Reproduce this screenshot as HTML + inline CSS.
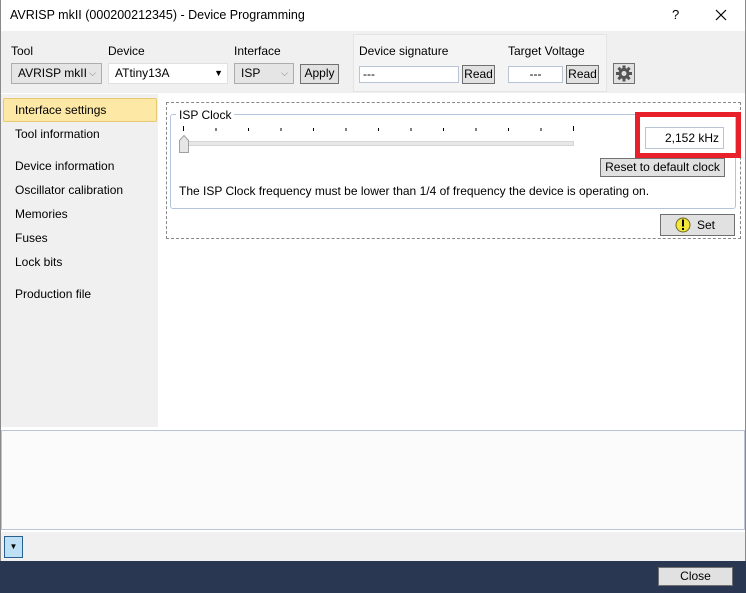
<!DOCTYPE html><html><head><style>
body{margin:0;width:746px;height:593px;position:relative;overflow:hidden;background:#fff;font-family:"Liberation Sans",sans-serif;font-size:12px;color:#000}
div{position:absolute;box-sizing:border-box}
.t{white-space:nowrap}
.btn{background:#e1e1e1;border:1px solid #adadad;text-align:center;line-height:17px}
.cb{background:#e5e5e5;border:1px solid #adadad;padding-left:6px;line-height:19px}
.in{background:#fff;border:1px solid #b8c4d4;line-height:15px}
.nav{left:15px}
</style></head><body>
<div style="left:0;top:0;width:746px;height:593px;border:1px solid #8a8a8a;border-top:none"></div>
<div class="t" style="left:10px;top:8px;font-size:12.5px">AVRISP mkII (000200212345) - Device Programming</div>
<div class="t" style="left:672px;top:7px;font-size:13px">?</div>
<div style="left:1px;top:31px;width:744px;height:62px;background:#f0f0f0"></div>
<div style="left:353px;top:34px;width:254px;height:58px;background:#f4f4f4;border:1px solid #e4e4e4"></div>
<div class="t" style="left:11px;top:44px">Tool</div>
<div class="t" style="left:108px;top:44px">Device</div>
<div class="t" style="left:234px;top:44px">Interface</div>
<div class="t" style="left:359px;top:44px">Device signature</div>
<div class="t" style="left:508px;top:44px">Target Voltage</div>
<div class="cb" style="left:11px;top:63px;width:91px;height:21px">AVRISP mkII<span style="position:absolute;right:5px;font-size:9px;color:#777">⌵</span></div>
<div style="left:108px;top:63px;width:120px;height:21px;background:#fff;border:1px solid #e0e0e0;padding-left:6px;line-height:19px">ATtiny13A<span style="position:absolute;right:4px;font-size:9px">▼</span></div>
<div class="cb" style="left:234px;top:63px;width:60px;height:21px">ISP<span style="position:absolute;right:5px;font-size:9px;color:#777">⌵</span></div>
<div class="btn" style="left:300px;top:64px;width:39px;height:20px;border-color:#707070">Apply</div>
<div class="in" style="left:359px;top:66px;width:100px;height:17px;padding-left:3px">---</div>
<div class="btn" style="left:462px;top:65px;width:33px;height:19px;border-color:#707070">Read</div>
<div class="in" style="left:508px;top:66px;width:55px;height:17px;text-align:center">---</div>
<div class="btn" style="left:566px;top:65px;width:33px;height:19px;border-color:#707070">Read</div>
<div class="btn" style="left:613px;top:63px;width:22px;height:21px;border-color:#707070"></div>
<div style="left:1px;top:94px;width:157px;height:333px;background:#f0f0f0"></div>
<div style="left:3px;top:98px;width:154px;height:24px;background:#fde8a5;border:1px solid #e8c870;border-radius:2px"></div>
<div class="t nav" style="top:103px">Interface settings</div>
<div class="t nav" style="top:127px">Tool information</div>
<div class="t nav" style="top:159px">Device information</div>
<div class="t nav" style="top:183px">Oscillator calibration</div>
<div class="t nav" style="top:207px">Memories</div>
<div class="t nav" style="top:231px">Fuses</div>
<div class="t nav" style="top:255px">Lock bits</div>
<div class="t nav" style="top:287px">Production file</div>
<div style="left:166px;top:102px;width:575px;height:137px;border:1px dashed #888"></div>
<div style="left:170px;top:114px;width:566px;height:95px;border:1px solid #b4c4dc;border-radius:3px"></div>
<div class="t" style="left:176px;top:108px;background:#fff;padding:0 3px">ISP Clock</div>
<div style="left:183px;top:141px;width:391px;height:5px;background:#e7e7e7;border:1px solid #d6d6d6"></div>
<div style="left:635px;top:112px;width:106px;height:46px;border:5px solid #e8202a"></div>
<div class="in" style="left:645px;top:127px;width:79px;height:22px;text-align:right;padding-right:4px;line-height:20px">2,152 kHz</div>
<div class="btn" style="left:600px;top:158px;width:125px;height:19px;border-color:#707070">Reset to default clock</div>
<div class="t" style="left:179px;top:184px">The ISP Clock frequency must be lower than 1/4 of frequency the device is operating on.</div>
<div class="btn" style="left:660px;top:214px;width:75px;height:22px;border-color:#707070;line-height:20px;text-align:left;padding-left:36px">Set</div>
<div style="left:1px;top:430px;width:744px;height:100px;background:#fbfbfb;border:1px solid #b8c4d8"></div>
<div style="left:1px;top:532px;width:744px;height:29px;background:#f0f0f0"></div>
<div style="left:4px;top:536px;width:19px;height:22px;background:#bee0f4;border:1px solid #2a6090;text-align:center;font-size:8px;line-height:20px">▼</div>
<div style="left:0;top:561px;width:746px;height:32px;background:#2a3752"></div>
<div class="btn" style="left:658px;top:567px;width:75px;height:19px;border-color:#707070">Close</div>
<svg style="position:absolute;left:0;top:0" width="746" height="300">
<path d="M716 10L726 20M726 10L716 20" stroke="#000" stroke-width="1.2"/>
<g transform="translate(624 73.5)">
<g fill="#555"><rect x="-1.5" y="-8" width="3" height="16"/><rect x="-8" y="-1.5" width="16" height="3"/><rect x="-1.5" y="-8" width="3" height="16" transform="rotate(45)"/><rect x="-1.5" y="-8" width="3" height="16" transform="rotate(-45)"/></g>
<circle r="5.5" fill="#555"/><circle r="2.5" fill="#e1e1e1"/></g>
<g stroke="#000" stroke-width="1">
<line x1="183.5" y1="126" x2="183.5" y2="131"/><line x1="216" y1="128" x2="216" y2="131"/><line x1="248.5" y1="128" x2="248.5" y2="131"/><line x1="281" y1="128" x2="281" y2="131"/><line x1="313.5" y1="128" x2="313.5" y2="131"/><line x1="346" y1="128" x2="346" y2="131"/><line x1="378.5" y1="128" x2="378.5" y2="131"/><line x1="411" y1="128" x2="411" y2="131"/><line x1="443.5" y1="128" x2="443.5" y2="131"/><line x1="476" y1="128" x2="476" y2="131"/><line x1="508.5" y1="128" x2="508.5" y2="131"/><line x1="541" y1="128" x2="541" y2="131"/><line x1="573.5" y1="126" x2="573.5" y2="131"/></g>
<path d="M179.5 152.5V140.5L184 135.5L188.5 140.5V152.5Z" fill="#e6e6e6" stroke="#a0a0a0"/>
<circle cx="683" cy="225" r="7" fill="#f5e63c" stroke="#6a6a20"/>
<rect x="682" y="219.5" width="2" height="7" fill="#000"/><rect x="682" y="228" width="2" height="2" fill="#000"/>
</svg>
</body></html>
